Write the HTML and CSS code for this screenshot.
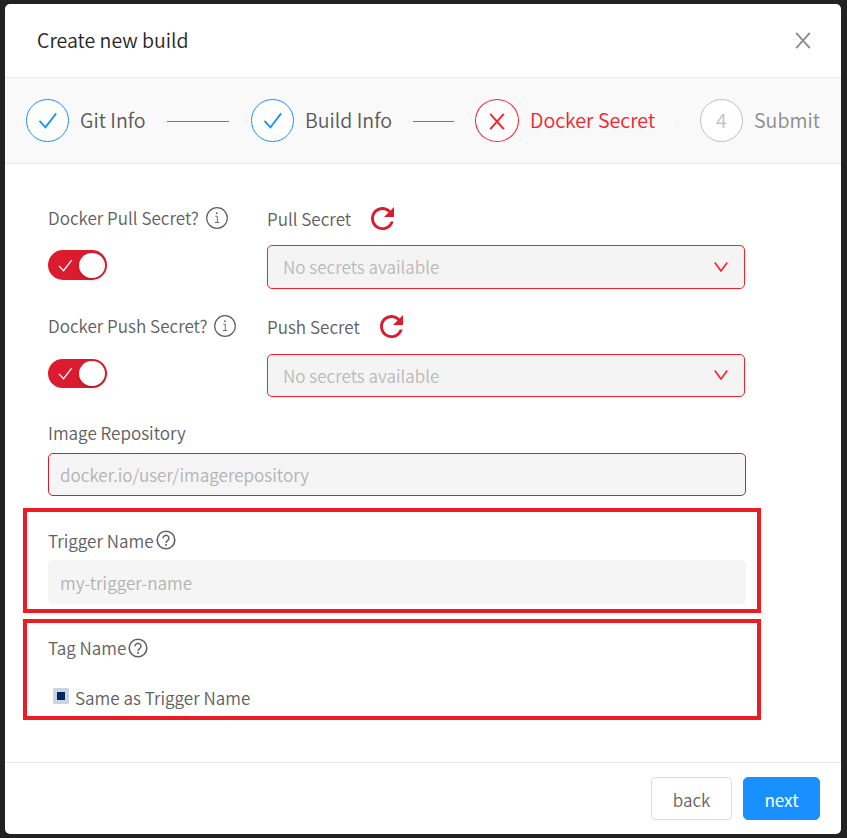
FILE: index.html
```html
<!DOCTYPE html>
<html lang="en">
<head>
<meta charset="utf-8">
<title>Create new build</title>
<link rel="stylesheet" href="styles.css">
</head>
<body>
<svg width="0" height="0" class="defs">
  <symbol id="info" viewBox="0 0 22 22"><circle cx="11" cy="11" r="10.300" fill="none" stroke="currentColor" stroke-width="1.200"/><path d="M9.300 9.200h2v6.300M9 15.500h4.200" fill="none" stroke="currentColor" stroke-width=".9"/><circle cx="10.900" cy="6.200" r=".9" fill="currentColor"/></symbol>
  <symbol id="help" viewBox="0 0 22 22"><circle cx="11" cy="11" r="8.800" fill="none" stroke="currentColor" stroke-width="1.600"/><path d="M8 9.200a3 2.800 0 1 1 4.800 2.200c-1 .8-1.700 1.200-1.700 2.500" fill="none" stroke="currentColor" stroke-width="1.500"/><path d="M10.200 15h1.700v1.700h-1.700z" fill="currentColor"/></symbol>
  <symbol id="refresh" viewBox="4 4 16 16"><path fill="currentColor" d="M17.650 6.350C16.200 4.900 14.210 4 12 4c-4.420 0-7.990 3.580-7.990 8s3.570 8 7.990 8c3.730 0 6.840-2.550 7.730-6h-2.080c-.82 2.330-3.040 4-5.650 4-3.310 0-6-2.690-6-6s2.690-6 6-6c1.660 0 3.140.69 4.220 1.780L13 11h7V4l-2.350 2.350z"/></symbol>
  <symbol id="check" viewBox="0 0 20 18"><path d="M1 9.500L7.300 16.300 18.600 1.500" fill="none" stroke="currentColor" stroke-width="1.900"/></symbol>
  <symbol id="cross" viewBox="0 0 16 17"><path d="M1.200 .8L14.800 16.200M14.800 .8L1.200 16.200" fill="none" stroke="currentColor" stroke-width="1.900"/></symbol>
  <symbol id="down" viewBox="0 0 14 10"><path d="M.8.5L7 9 13.200.5" fill="none" stroke="currentColor" stroke-width="1.600"/></symbol>
</svg>
<main class="modal">
  <header class="head"><h1>Create new build</h1><svg class="close"><use href="#cross"/></svg></header>
  <section class="steps">
    <div class="step s1"><span class="dot"><svg class="tick"><use href="#check"/></svg></span><span class="name">Git Info</span><i class="line"></i></div>
    <div class="step s2"><span class="dot"><svg class="tick"><use href="#check"/></svg></span><span class="name">Build Info</span><i class="line"></i></div>
    <div class="step s3"><span class="dot"><svg class="x"><use href="#cross"/></svg></span><span class="name">Docker Secret</span><i class="line"></i></div>
    <div class="step s4"><span class="dot"><span class="num">4</span></span><span class="name">Submit</span></div>
  </section>
  <section class="form">
    <div class="row">
      <div class="side">
        <div class="label"><span>Docker Pull Secret?</span><svg class="info"><use href="#info"/></svg></div>
        <div class="switch"><svg><use href="#check"/></svg><b></b></div>
      </div>
      <div class="main">
        <div class="label low"><span>Pull Secret</span><svg class="refresh"><use href="#refresh"/></svg></div>
        <div class="select"><span>No secrets available</span><svg><use href="#down"/></svg></div>
      </div>
    </div>
    <div class="row second">
      <div class="side">
        <div class="label"><span>Docker Push Secret?</span><svg class="info"><use href="#info"/></svg></div>
        <div class="switch"><svg><use href="#check"/></svg><b></b></div>
      </div>
      <div class="main">
        <div class="label low"><span>Push Secret</span><svg class="refresh"><use href="#refresh"/></svg></div>
        <div class="select"><span>No secrets available</span><svg><use href="#down"/></svg></div>
      </div>
    </div>
    <div class="repo"><div class="label"><span>Image Repository</span></div><div class="input error"><span>docker.io/user/imagerepository</span></div></div>
    <div class="mark trigger"><div class="label"><span>Trigger Name</span><svg class="help"><use href="#help"/></svg></div><div class="input"><span>my-trigger-name</span></div></div>
    <div class="mark tag"><div class="label"><span>Tag Name</span><svg class="help"><use href="#help"/></svg></div><div class="option"><i class="box"></i><span>Same as Trigger Name</span></div></div>
  </section>
  <footer class="foot"><button class="btn">back</button><button class="btn primary">next</button></footer>
</main>
</body>
</html>
```
FILE: styles.css
```css
* { box-sizing: border-box; }
body { margin: 0; height: 838px; padding: 4px 6px 4px 5px; overflow: hidden; background: #222; font: 350 17.07px/24px "Noto Sans CJK SC", "Noto Sans", sans-serif; color: #606060; }
.defs { position: absolute; }
svg { flex: none; overflow: visible; }
.modal { display: flex; flex-direction: column; width: 836px; height: 830px; background: #fff; border-radius: 5px; overflow: hidden; }
.head { display: flex; align-items: center; justify-content: space-between; height: 74px; padding: 0 30px 0 32px; border-bottom: 1px solid #e8e8e8; }
h1 { margin: 0; padding-bottom: 2px; font-size: 19.55px; font-weight: 350; color: #262626; }
.close { width: 16px; height: 17px; color: #8c8c8c; }
.steps { display: flex; height: 86px; padding-left: 21px; background: #f9f9f9; border-bottom: 1px solid #e8e8e8; }
.step { display: flex; align-items: center; font-size: 19.6px; color: #595959; white-space: nowrap; }
.name, .num { padding-bottom: 2px; }
.s1 { width: 225px; }
.s2 { width: 224px; }
.s3 { width: 225px; color: #f5222d; }
.s4 { color: #8c8c8c; }
.dot { display: flex; align-items: center; justify-content: center; flex: none; width: 43px; height: 43px; margin-right: 11px; border: 1px solid #1890ff; border-radius: 50%; background: #fff; color: #1890ff; }
.s3 .dot { width: 44px; margin-right: 11px; border-color: #f5222d; color: #f5222d; }
.s4 .dot { border-color: #bfbfbf; color: #bfbfbf; }
.tick { width: 20px; height: 17px; }
.x { width: 16px; height: 17px; margin-top: 1px; }
.line { flex: 1; height: 1px; margin: 2px 22px 0 21px; background: #1890ff; }
.s2 .line { margin-right: 21px; }
.s3 .line { background: #e8e8e8; }
.form { flex: 1; padding-left: 43px; }
.row { display: flex; height: 108px; padding-top: 42px; }
.side { width: 219px; }
.main { width: 478px; }
.label { display: flex; align-items: center; height: 24px; white-space: nowrap; }
.label.low { padding-top: 1px; }
.info { width: 22px; height: 22px; margin-left: 7px; }
.refresh { width: 23px; height: 23px; margin: 0 0 1px 20px; color: #dc1c2e; }
.help { width: 22px; height: 22px; margin: 0 0 1px 1px; }
.switch { display: flex; align-items: center; justify-content: space-between; width: 59px; height: 30px; margin-top: 20px; padding: 0 2px 0 10px; border-radius: 15px; background: #dc1c2e; color: #fff; }
.switch svg { width: 15px; height: 13px; }
.switch b { width: 26px; height: 25px; border-radius: 13px; background: #fff; box-shadow: 0 2px 4px rgba(0,35,11,.2); }
.select { display: flex; align-items: center; justify-content: space-between; height: 44px; margin-top: 15px; padding: 0 16px 0 15px; border: 1px solid #f5222d; border-radius: 5px; background: #f4f4f4; color: #bababa; }
.select svg { width: 14px; height: 10px; margin-bottom: 1px; color: #f5222d; }
.second .select { height: 43px; margin-top: 16px; }
.second .switch { height: 29px; margin-top: 21px; }
.repo { height: 128px; padding-top: 41px; }
.input { display: flex; align-items: center; width: 698px; height: 43px; padding: 0 12px; border-radius: 5px; background: #f5f5f5; color: #b3b3b3; }
.error { margin-top: 8px; padding: 0 11px; border: 1px solid #dc1c2e; }
.mark { width: 738px; margin-left: -25px; padding-left: 21px; border: 4px solid #ed1c24; }
.trigger { height: 105px; padding-top: 16px; }
.trigger span { padding-top: 2px; }
.trigger .input { height: 44px; margin-top: 8px; }
.tag { height: 101px; margin-top: 6px; padding-top: 13px; }
.option { display: flex; align-items: center; margin-top: 26px; }
.box { width: 16px; height: 16px; margin: -5px 6px 0 5px; border: 4px solid #ccd4e0; border-radius: 2px; background: #002766; }
.foot { display: flex; justify-content: flex-end; height: 72px; padding: 14px 21px 0; border-top: 1px solid #e8e8e8; }
.btn { width: 81px; height: 43px; padding: 2px 0 0; border: 1px solid #d9d9d9; border-radius: 5px; background: #fff; color: #656565; font: inherit; box-shadow: 0 2px 0 rgba(0,0,0,.015); }
.primary { width: 77px; margin-left: 11px; border-color: #1890ff; background: #1890ff; color: #fff; font-weight: 400; }
```
